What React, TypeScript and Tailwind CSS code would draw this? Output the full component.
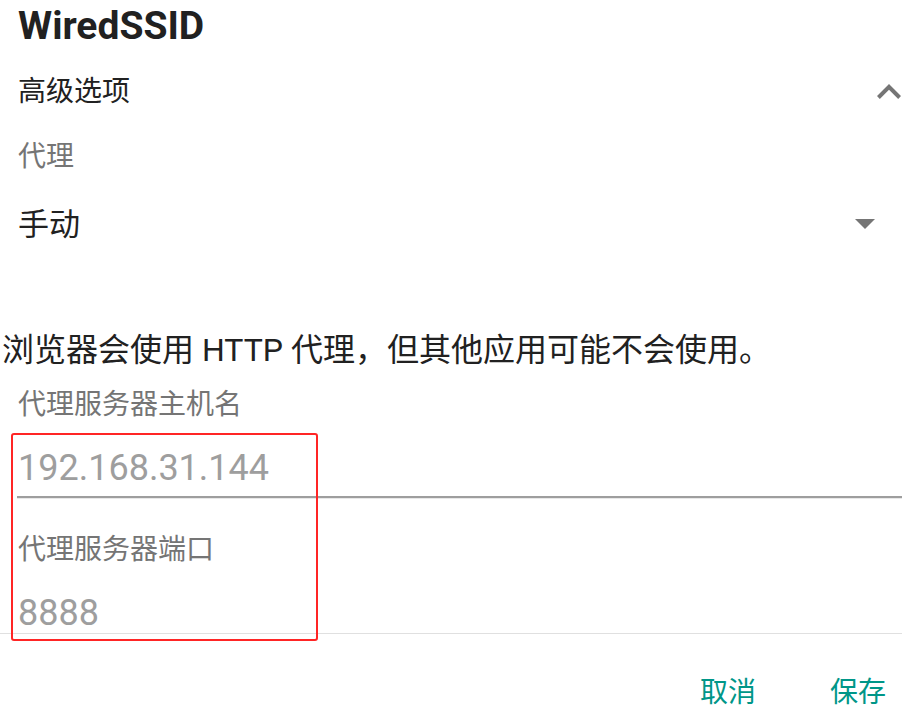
const FONT = "font-['Roboto','Noto_Sans_CJK_SC',sans-serif]";

function ChevronUp() {
  return (
    <svg width="24" height="15" viewBox="6 8 12 7.41" className="fill-[#757575]">
      <path d="M12 8l-6 6 1.41 1.41L12 10.83l4.59 4.58L18 14z" />
    </svg>
  );
}

function DropArrow() {
  return (
    <svg width="20" height="10" viewBox="7 10 10 5" className="fill-[#757575]">
      <path d="M7 10l5 5 5-5z" />
    </svg>
  );
}

export default function App() {
  return (
    <div className={`relative h-[726px] w-[902px] overflow-hidden bg-white ${FONT}`}>
      <div className="flex h-[52px] items-center pl-[18px] text-[39px] font-bold leading-[52px] text-[#212121]">
        WiredSSID
      </div>

      <div className="flex h-[76px] items-center justify-between pl-[18px] pr-[1px] pt-[3px]">
        <span className="text-[28px] leading-none text-[#212121]">高级选项</span>
        <ChevronUp />
      </div>

      <div className="flex h-[58px] items-center pl-[18px] text-[28px] leading-none text-[#757575]">
        代理
      </div>

      <div className="flex h-[76px] items-center justify-between pl-[18px] pr-[27px]">
        <span className="text-[31px] leading-none text-[#212121]">手动</span>
        <DropArrow />
      </div>

      <div className="h-[60px]" />

      <div className="flex h-[56px] items-center pl-[2px] text-[32px] leading-none text-[#212121]">
        浏览器会使用 HTTP 代理，但其他应用可能不会使用。
      </div>

      <div className="flex h-[54px] items-center pl-[18px] text-[28px] leading-none text-[#757575]">
        代理服务器主机名
      </div>

      <div className="ml-[17px] mt-[8px]">
        <div className="flex h-[56px] items-center pl-[1px] text-[36px] leading-none text-[#9e9e9e]">
          192.168.31.144
        </div>
        <div className="h-[2px] bg-[#9e9e9e]" />
        <div className="h-[1px] bg-[#e8e8e8]" />
      </div>

      <div className="mt-[23px] flex h-[56px] items-center pl-[18px] text-[28px] leading-none text-[#757575]">
        代理服务器端口
      </div>

      <div className="flex h-[55px] items-center pl-[18px] pt-[15px] text-[36px] leading-none text-[#9e9e9e]">
        8888
      </div>
      <div className="h-[1px] bg-[#e0e0e0]" />

      <div className="mt-[28px] flex h-[62px] items-center justify-end gap-[74px] pr-[16px] text-[28px] leading-none text-[#009688]">
        <span>取消</span>
        <span>保存</span>
      </div>

      <div className="absolute left-[11px] top-[433px] h-[208px] w-[307px] rounded-[3px] border-2 border-[#ff2525]" />
    </div>
  );
}
